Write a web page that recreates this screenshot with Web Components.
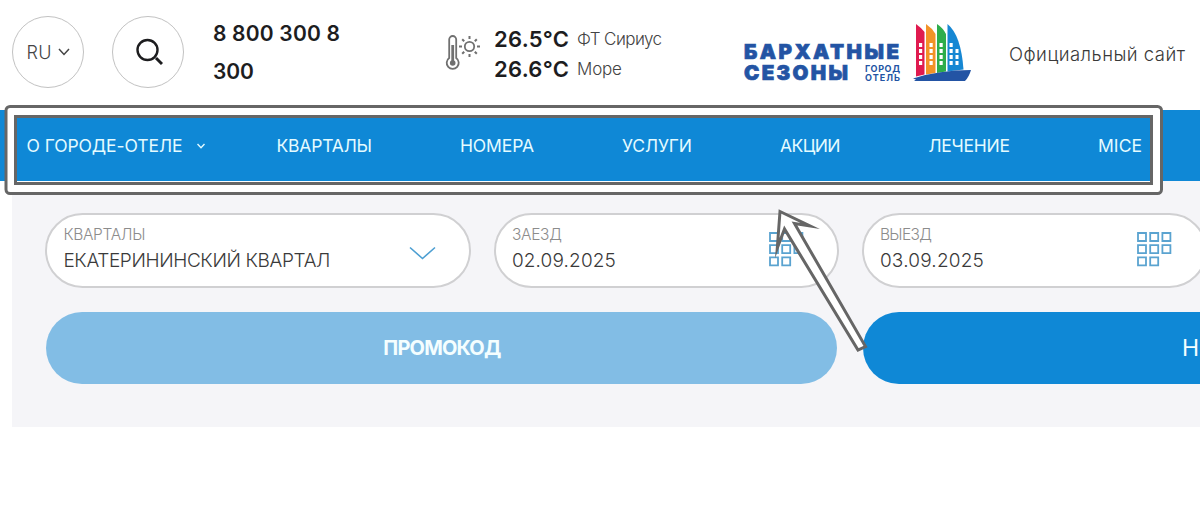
<!DOCTYPE html>
<html lang="ru">
<head>
<meta charset="utf-8">
<title>Бархатные сезоны</title>
<style>
	body {
		margin: 0;
		width: 1200px;
		height: 512px;
		overflow: hidden;
		position: relative;
		background: #fff;
		font-family: Inter, "Liberation Sans", sans-serif;
	}
</style>
</head>
<body>
<site-header></site-header>
<site-nav></site-nav>
<booking-panel></booking-panel>
<nav-callout></nav-callout>

<script>
const make = html => {
	const template = document.createElement("template");
	template.innerHTML = html;
	return template;
};

class BaseElement extends HTMLElement {
	constructor() {
		super();
		this._shadowRoot = this.attachShadow({ mode: "open" });
		this._shadowRoot.appendChild(this.constructor.template.content.cloneNode(true));
	}
}

class RoundButton extends BaseElement {
	static template = make(`
<style>
	:host { display: block; flex: none; }
	button {
		display: flex;
		align-items: center;
		justify-content: center;
		gap: 7px;
		width: 72px;
		height: 72px;
		box-sizing: border-box;
		padding: 0;
		border: 1px solid #c2c2c2;
		border-radius: 50%;
		background: #fff;
		color: #444;
		font: 300 18px Inter, sans-serif;
	}
</style>
<button><slot></slot></button>`);
}

class WeatherInfo extends BaseElement {
	static template = make(`
<style>
	:host { display: flex; align-items: flex-start; color: #444; }
	svg { display: block; margin: 10px 12px 0 0; }
	.row { display: flex; align-items: center; gap: 8px; height: 30px; }
	b { font-weight: 600; font-size: 22px; color: #1d1d1f; }
	.row > fit-text { font-size: 17px; font-weight: 300; }
</style>
<svg width="37" height="36" viewBox="0 0 37 36" fill="none" stroke="#707070" stroke-width="1.8">
	<path d="M4.200 24V5.500a3.500 3.500 0 0 1 7 0V24a6 6 0 1 1-7 0z"/>
	<path d="M7.700 11v17" stroke-width="2.800"/>
	<circle cx="7.700" cy="29" r="2.800" fill="#707070" stroke="none"/>
	<circle cx="24.500" cy="12.500" r="4.700"/>
	<path stroke-width="2" d="M24.500 2v3M24.500 20v3M14 12.500h3M32 12.500h3M17.200 5.200l2 2M29.800 17.800l2 2M31.800 5.200l-2 2M19.200 17.800l-2 2"/>
</svg>
<div>
	<div class="row"><b><fit-text width="75">26.5°C</fit-text></b><fit-text width="85">ФТ Сириус</fit-text></div>
	<div class="row"><b><fit-text width="75">26.6°C</fit-text></b><fit-text width="45">Море</fit-text></div>
</div>`);
}

class SiteLogo extends BaseElement {
	static template = make(`
<style>
	:host { display: flex; color: #2354a4; }
	.name { width: 156px; font-size: 20.500px; font-weight: 900; line-height: 21px; -webkit-text-stroke: .7px #2354a4; }
	.name fit-text { display: block; }
	.second { display: flex; justify-content: space-between; }
	.sub { font-size: 9px; font-weight: 700; line-height: 9px; padding-top: 2px; -webkit-text-stroke: 0; }
	svg { margin-left: 13px; margin-top: -18px; }
</style>
<div class="name">
	<fit-text width="155">БАРХАТНЫЕ</fit-text>
	<div class="second">
		<fit-text width="104">СЕЗОНЫ</fit-text>
		<div class="sub"><fit-text width="35">ГОРОД</fit-text><fit-text width="35">ОТЕЛЬ</fit-text></div>
	</div>
</div>
<svg width="60" height="60" viewBox="0 0 60 60">
	<path fill="#e01a4f" d="M3 1Q8.500 5 11.500 9V51.500L3 53.500Z"/>
	<path fill="#f39327" d="M13 1Q19 5 22.500 11V50L13 51.500Z"/>
	<path fill="#2ead4b" d="M24 1Q30 5 33 11V48.500L24 50Z"/>
	<path fill="#1687d3" d="M34.500 1Q48 12 50.500 46.500L34.500 48.500Z"/>
	<path fill="#fff" d="M6 20h3.200v4H6zM6 26h3.200v4H6zM6 32h3.200v4H6zM6 38h3.200v4H6zM16.500 20h3.200v4h-3.200zM16.500 26h3.200v4h-3.200zM16.500 32h3.200v4h-3.200zM16.500 38h3.200v4h-3.200zM26.500 20h3.200v4h-3.200zM26.500 26h3.200v4h-3.200zM26.500 32h3.200v4h-3.200zM26.500 38h3.200v4h-3.200zM36.500 20h3.200v4h-3.200zM36.500 26h3.200v4h-3.200zM36.500 32h3.200v4h-3.200zM36.500 38h3.200v4h-3.200zM42.500 26h3v4h-3zM42.500 32h3v4h-3zM42.500 38h3v4h-3z"/>
	<path fill="#2354a4" d="M0 55.500Q26 47 58 47Q56 54 52 58H1L3 56.500Z"/>
</svg>`);
}

class SiteHeader extends BaseElement {
	static template = make(`
<style>
	:host { display: flex; height: 109.500px; align-items: flex-start; }
	round-button { margin: 16px 28px 0 12.400px; }
	round-button + round-button { margin: 16px 28.600px 0 0; }
	.phone { font-size: 21px; font-weight: 600; line-height: 37.500px; width: 232px; padding-top: 15px; color: #1d1d1f; }
	weather-info { margin-top: 24px; width: 299px; }
	site-logo { margin-top: 41px; width: 265px; }
	.official { font-size: 18.500px; color: #3a3a3a; font-weight: 300; margin-top: 43px; line-height: 22px; }
</style>
<round-button>
	<fit-text width="25">RU</fit-text>
	<svg width="12" height="8" viewBox="0 0 12 8" fill="none" stroke="#444" stroke-width="1.500"><path d="M1 1l5 5.500L11 1"/></svg>
</round-button>
<round-button>
	<svg width="28" height="28" viewBox="0 0 28 28" fill="none" stroke="#1d1d1f" stroke-width="2.400" style="margin-left:2px;margin-top:-1px"><circle cx="12.500" cy="12" r="10"/><path d="M21 20l6 6" stroke-width="3"/></svg>
</round-button>
<div class="phone"><fit-text width="127">8 800 300 8</fit-text><br><fit-text width="41">300</fit-text></div>
<weather-info></weather-info>
<site-logo></site-logo>
<fit-text class="official" width="176">Официальный сайт</fit-text>`);
}

class SiteNav extends BaseElement {
	static template = make(`
<style>
	:host {
		display: block;
		height: 71.500px;
		background: #0f88d6;
		color: #e4fbff;
		font-size: 17.500px;
		font-weight: 400;
	}
	nav { display: flex; align-items: center; gap: 88px; height: 72px; padding-left: 26.500px; }
	.first { display: flex; align-items: center; gap: 14px; width: 163px; margin-right: -1px; }
	svg { flex: none; }
</style>
<nav>
	<span class="first"><fit-text width="156">О ГОРОДЕ-ОТЕЛЕ</fit-text>
	<svg width="8" height="6" viewBox="0 0 8 6" fill="none" stroke="#e4fbff" stroke-width="1.400"><path d="M.5 1L4 4.800L7.500 1"/></svg></span>
	<fit-text width="95.5">КВАРТАЛЫ</fit-text>
	<fit-text width="74">НОМЕРА</fit-text>
	<fit-text width="70">УСЛУГИ</fit-text>
	<fit-text width="60.5">АКЦИИ</fit-text>
	<fit-text width="81.5">ЛЕЧЕНИЕ</fit-text>
	<fit-text width="44">MICE</fit-text>
</nav>`);
}

class BookingField extends BaseElement {
	static template = make(`
<style>
	:host {
		display: flex;
		flex: none;
		align-items: center;
		justify-content: space-between;
		box-sizing: border-box;
		height: 75px;
		padding: 0 33px 0 16px;
		border: 2px solid #d0d0d2;
		border-radius: 38px;
		background: #fff;
	}
	.text { display: flex; flex-direction: column; margin-top: -4px; }
	.label { font-size: 15.500px; font-weight: 300; line-height: 24px; color: #8c8c8c; }
	.value { font-size: 19px; font-weight: 300; line-height: 27px; color: #3a3a3a; }
</style>
<div class="text">
	<div class="label"><slot name="label"></slot></div>
	<div class="value"><slot></slot></div>
</div>
<slot name="icon"></slot>`);
}

class CalendarIcon extends BaseElement {
	static template = make(`
<style>
	:host { display: block; }
	svg { display: block; }
</style>
<svg width="35" height="35" viewBox="0 0 35 35" fill="none" stroke="#5aa3d0" stroke-width="1.800">
	<path d="M1 1h8v8H1zM13.200 1h8v8h-8zM25.400 1h8v8h-8zM1 13.200h8v8H1zM13.200 13.200h8v8h-8zM25.400 13.200h8v8h-8zM1 25.400h8v8H1zM13.200 25.400h8v8h-8z"/>
</svg>`);
}

class BookingPanel extends BaseElement {
	static template = make(`
<style>
	:host {
		display: flex;
		flex-direction: column;
		gap: 24px;
		box-sizing: border-box;
		height: 246px;
		margin-left: 12.400px;
		padding: 32px 0 0 33px;
		background: #f5f5f8;
		overflow: hidden;
	}
	.row { display: flex; gap: 23px; }
	.buttons { gap: 25.500px; padding-left: 1px; }
	button {
		flex: none;
		height: 72px;
		padding: 0;
		border: 0;
		border-radius: 36px;
		color: #f4feff;
		font-family: inherit;
	}
	.promo { width: 791px; background: #82bde5; font-size: 20px; font-weight: 700; }
	.find { width: 400px; padding-left: 319px; background: #0f88d6; font-size: 23px; font-weight: 400; text-align: left; }
</style>
<div class="row">
	<booking-field style="width:425.5px">
		<fit-text slot="label" width="82">КВАРТАЛЫ</fit-text>
		<fit-text width="267">ЕКАТЕРИНИНСКИЙ КВАРТАЛ</fit-text>
		<svg slot="icon" width="27" height="14" viewBox="0 0 27 14" fill="none" stroke="#4d9fd2" stroke-width="1.600" style="margin-top:5px"><path d="M1 1.500l12.500 11L26 1.500"/></svg>
	</booking-field>
	<booking-field style="width:345px">
		<fit-text slot="label" width="50">ЗАЕЗД</fit-text>
		<fit-text width="104">02.09.2025</fit-text>
		<calendar-icon slot="icon" style="margin-top:-3px"></calendar-icon>
	</booking-field>
	<booking-field style="width:345px">
		<fit-text slot="label" width="52">ВЫЕЗД</fit-text>
		<fit-text width="104">03.09.2025</fit-text>
		<calendar-icon slot="icon" style="margin-top:-3px"></calendar-icon>
	</booking-field>
</div>
<div class="row buttons">
	<button class="promo"><fit-text width="118">ПРОМОКОД</fit-text></button>
	<button class="find">Н</button>
</div>`);
}

// frame around the menu with an arrow pointing at it
class NavCallout extends BaseElement {
	static template = make(`
<style>
	:host { position: absolute; left: 0; top: 0; pointer-events: none; }
	svg { display: block; }
</style>
<svg width="1200" height="512" fill="none" stroke="#666" stroke-width="3">
	<rect x="10.500" y="111" width="1146" height="78.500" rx="1" stroke="#fff" stroke-width="9"/>
	<path d="M17 181.500H1150" stroke="#fff" stroke-width="1"/>
	<rect x="6" y="106.500" width="1155.500" height="87" rx="4"/>
	<rect x="15.500" y="116.500" width="1136" height="67"/>
	<path d="M780 211.500L810 226L794.500 223.500L865.500 346.500L858 350L784.500 229L777.300 248Z" fill="#fff" stroke-miterlimit="30"/>
</svg>`);
}

// nowrap label whose tracking is spread so that it takes the given width
class FitText extends BaseElement {
	static template = make(`
<style>
	:host { display: inline-block; flex: none; white-space: nowrap; }
</style>
<span><slot></slot></span>`);

	connectedCallback() {
		const width = Number(this.getAttribute("width"));
		const $span = this._shadowRoot.querySelector("span");
		const spacing = (width - $span.getBoundingClientRect().width) / (this.textContent.length - 1);
		this.style.letterSpacing = spacing + "px";
		this.style.width = width + "px";
	}
}

customElements.define("round-button", RoundButton);
customElements.define("weather-info", WeatherInfo);
customElements.define("site-logo", SiteLogo);
customElements.define("site-header", SiteHeader);
customElements.define("site-nav", SiteNav);
customElements.define("calendar-icon", CalendarIcon);
customElements.define("booking-field", BookingField);
customElements.define("booking-panel", BookingPanel);
customElements.define("nav-callout", NavCallout);
// last, so that every label is already laid out when it is measured
customElements.define("fit-text", FitText);
</script>
</body>
</html>
